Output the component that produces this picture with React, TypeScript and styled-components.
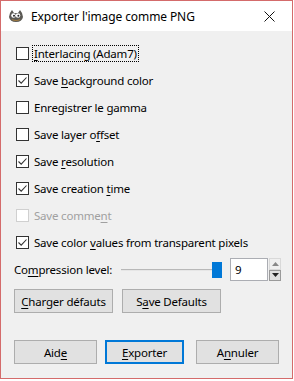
import React from "react";
import styled, { createGlobalStyle } from "styled-components";

const GlobalStyle = createGlobalStyle`
	body {
		margin: 0;
		background: #ffffff;
	}
`;

const FONT = `"Noto Sans", "Open Sans", sans-serif`;

type Option = {
	before: string;
	key: string;
	after: string;
	checked?: boolean;
	disabled?: boolean;
	focused?: boolean;
};

const options: Option[] = [
	{ before: "", key: "I", after: "nterlacing (Adam7)", focused: true },
	{ before: "Save ", key: "b", after: "ackground color", checked: true },
	{ before: "Enregistrer le gamma", key: "", after: "" },
	{ before: "Save layer o", key: "f", after: "fset" },
	{ before: "Save ", key: "r", after: "esolution", checked: true },
	{ before: "Save creation ", key: "t", after: "ime", checked: true },
	{ before: "Save comme", key: "n", after: "t", disabled: true },
	{
		before: "Save color ",
		key: "v",
		after: "alues from transparent pixels",
		checked: true,
	},
];

function Mnemonic({ before, k, after }: { before: string; k: string; after: string }) {
	return (
		<>
			{before}
			{k && <u>{k}</u>}
			{after}
		</>
	);
}

function GimpIcon() {
	return (
		<svg width="16" height="14" viewBox="0 0 16 14">
			<path d="M2 4 L4 1 L6 4 L10 4 L12 1 L14 4 L15 8 Q14 13 8 13 Q2 13 1 8 Z" fill="#5c5a55" />
			<circle cx="5.5" cy="6.5" r="2.3" fill="#fff" />
			<circle cx="10" cy="6.5" r="2.3" fill="#fff" />
			<circle cx="6" cy="6.8" r="1" fill="#222" />
			<circle cx="10.4" cy="6.8" r="1" fill="#222" />
			<path d="M4 10.5 Q8 12.5 12 10.5" stroke="#a07a40" strokeWidth="1.2" fill="none" />
		</svg>
	);
}

function App() {
	return (
		<>
			<GlobalStyle />
			<Window>
				<TitleBar>
					<TitleIcon>
						<GimpIcon />
					</TitleIcon>
					<Title>Exporter l'image comme PNG</Title>
					<CloseButton>
						<svg width="11" height="11" viewBox="0 0 11 11">
							<path d="M0.5 0.5 L10.5 10.5 M10.5 0.5 L0.5 10.5" stroke="#111" strokeWidth="1" />
						</svg>
					</CloseButton>
				</TitleBar>

				<Body>
					{options.map((o, i) => (
						<CheckRow key={i} $disabled={o.disabled}>
							<Box $disabled={o.disabled}>
								{o.checked && (
									<svg width="11" height="11" viewBox="0 0 11 11">
										<path
											d="M1.5 5.5 L4.2 8.2 L9.5 2.5"
											stroke="#333"
											strokeWidth="1.1"
											fill="none"
										/>
									</svg>
								)}
							</Box>
							<Label $focused={o.focused}>
								<Mnemonic before={o.before} k={o.key} after={o.after} />
							</Label>
						</CheckRow>
					))}

					<CompressionRow>
						<CompressionLabel>
							Co<u>m</u>pression level:
						</CompressionLabel>
						<Slider>
							<Track />
							<Thumb />
						</Slider>
						<Spin>
							<SpinInput>9</SpinInput>
							<SpinArrows>
								<SpinArrow>
									<svg width="7" height="4" viewBox="0 0 7 4">
										<path d="M0 4 L3.5 0 L7 4 Z" fill="#888" />
									</svg>
								</SpinArrow>
								<SpinArrow $active>
									<svg width="7" height="4" viewBox="0 0 7 4">
										<path d="M0 0 L3.5 4 L7 0 Z" fill="#222" />
									</svg>
								</SpinArrow>
							</SpinArrows>
						</Spin>
					</CompressionRow>

					<DefaultsRow>
						<Button $width={99}>
							<u>C</u>harger défauts
						</Button>
						<Button $width={99}>
							S<u>a</u>ve Defaults
						</Button>
					</DefaultsRow>

					<ActionRow>
						<Button $width={83}>
							Aid<u>e</u>
						</Button>
						<Button $width={79} $primary>
							<u>E</u>xporter
						</Button>
						<Button $width={83}>
							A<u>n</u>nuler
						</Button>
					</ActionRow>
				</Body>
			</Window>
		</>
	);
}

const Window = styled.div`
	width: 293px;
	height: 379px;
	box-sizing: border-box;
	border: 1px solid #d46b6b;
	background: #f0f0f0;
	display: flex;
	flex-direction: column;
	font-family: ${FONT};
	font-size: 11.5px;
	letter-spacing: -0.2px;
	color: #000;

	u {
		text-decoration-thickness: 1px;
		text-underline-offset: 2px;
	}
`;

const TitleBar = styled.div`
	height: 30px;
	background: #ffffff;
	display: flex;
	align-items: center;
	padding-left: 7px;
`;

const TitleIcon = styled.div`
	width: 16px;
	height: 14px;
	display: flex;
	margin-right: 7px;
	margin-top: -1px;
`;

const Title = styled.div`
	flex: 1;
	font-size: 12px;
	letter-spacing: -0.1px;
`;

const CloseButton = styled.div`
	width: 46px;
	height: 30px;
	display: flex;
	align-items: center;
	justify-content: center;
`;

const Body = styled.div`
	flex: 1;
	padding: 9px 0 0 13px;
	display: flex;
	flex-direction: column;
`;

const CheckRow = styled.div<{ $disabled?: boolean }>`
	height: 27px;
	display: flex;
	align-items: center;
	padding-left: 2px;
	color: ${({ $disabled }) => ($disabled ? "#a0a0a0" : "#000")};
`;

const Box = styled.div<{ $disabled?: boolean }>`
	width: 13px;
	height: 13px;
	box-sizing: border-box;
	border: 1px solid ${({ $disabled }) => ($disabled ? "#d0d0d0" : "#333333")};
	background: #ffffff;
	display: flex;
	align-items: center;
	justify-content: center;
	margin-right: 3px;
`;

const Label = styled.span<{ $focused?: boolean }>`
	padding: 0 1px;
	line-height: 15px;
	border: 1px dotted ${({ $focused }) => ($focused ? "#000" : "transparent")};
`;

const CompressionRow = styled.div`
	height: 27px;
	display: flex;
	align-items: center;
`;

const CompressionLabel = styled.span`
	width: 107px;
`;

const Slider = styled.div`
	width: 101px;
	height: 16px;
	display: flex;
	align-items: center;
`;

const Track = styled.div`
	flex: 1;
	height: 1px;
	background: #b8b8b8;
	border-bottom: 1px solid #e6e6e6;
`;

const Thumb = styled.div`
	width: 10px;
	height: 16px;
	background: #0078d7;
`;

const Spin = styled.div`
	margin-left: 8px;
	display: flex;
	align-items: stretch;
	height: 23px;
`;

const SpinInput = styled.div`
	width: 38px;
	box-sizing: border-box;
	border: 1px solid #abadb3;
	background: #ffffff;
	padding-left: 4px;
	display: flex;
	align-items: center;
`;

const SpinArrows = styled.div`
	width: 12px;
	margin-left: 1px;
	display: flex;
	flex-direction: column;
`;

const SpinArrow = styled.div<{ $active?: boolean }>`
	flex: 1;
	box-sizing: border-box;
	border: 1px solid ${({ $active }) => ($active ? "#9a9a9a" : "#d9d9d9")};
	background: ${({ $active }) => ($active ? "#e0e0e0" : "#f0f0f0")};
	display: flex;
	align-items: center;
	justify-content: center;
`;

const DefaultsRow = styled.div`
	display: flex;
	gap: 9px;
	margin-top: 6px;
`;

const ActionRow = styled.div`
	display: flex;
	gap: 8px;
	margin-top: 27px;

	& > *:last-child {
		margin-left: 4px;
	}
`;

const Button = styled.div<{ $width: number; $primary?: boolean }>`
	width: ${({ $width }) => $width}px;
	height: 24px;
	box-sizing: border-box;
	background: #e1e1e1;
	border: ${({ $primary }) => ($primary ? "2px solid #0078d7" : "1px solid #adadad")};
	display: flex;
	align-items: center;
	justify-content: center;
`;

export default App;
